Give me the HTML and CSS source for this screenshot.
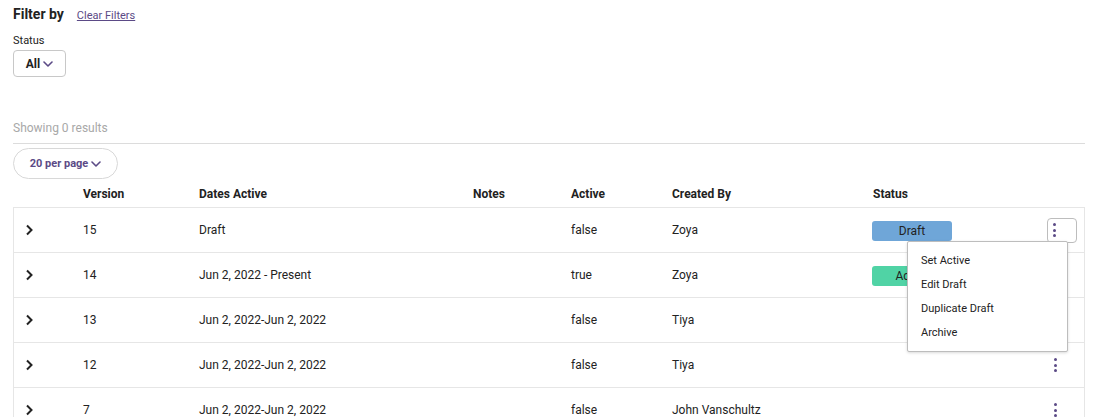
FILE: index.html
```html
<!DOCTYPE html>
<html>
<head>
<meta charset="utf-8">
<link rel="stylesheet" href="styles.css">
</head>
<body>
<div class="page">
  <div class="filter-head">
    <span class="filter-title">Filter by</span>
    <a class="clear-link" href="#">Clear Filters</a>
  </div>
  <div class="field-label">Status</div>
  <button class="select-btn"><span>All</span><svg class="chev-down" viewBox="0 0 10 6" width="10" height="6"><path d="M1 1l4 4 4-4" fill="none" stroke="#5b4a86" stroke-width="1.6" stroke-linecap="round" stroke-linejoin="round"/></svg></button>

  <div class="results">Showing 0 results</div>
  <div class="divider"></div>
  <button class="pill-btn"><span>20 per page</span><svg class="chev-down" viewBox="0 0 10 6" width="10" height="6"><path d="M1 1l4 4 4-4" fill="none" stroke="#5b4a86" stroke-width="1.6" stroke-linecap="round" stroke-linejoin="round"/></svg></button>

  <div class="table">
    <div class="row head">
      <div></div>
      <div>Version</div>
      <div>Dates Active</div>
      <div>Notes</div>
      <div>Active</div>
      <div>Created By</div>
      <div>Status</div>
      <div></div>
    </div>
    <div class="body">
      <div class="row">
        <div class="exp"><svg viewBox="0 0 8 12" width="8" height="12"><path d="M2 1.5l4.5 4.5-4.5 4.5" fill="none" stroke="#222" stroke-width="2"/></svg></div>
        <div>15</div>
        <div>Draft</div>
        <div></div>
        <div>false</div>
        <div>Zoya</div>
        <div class="status"><span class="badge draft">Draft</span></div>
        <div class="act">
          <button class="kebab open"><i></i><i></i><i></i></button>
          <div class="menu">
            <div class="menu-item">Set Active</div>
            <div class="menu-item">Edit Draft</div>
            <div class="menu-item">Duplicate Draft</div>
            <div class="menu-item">Archive</div>
          </div>
        </div>
      </div>
      <div class="row">
        <div class="exp"><svg viewBox="0 0 8 12" width="8" height="12"><path d="M2 1.5l4.5 4.5-4.5 4.5" fill="none" stroke="#222" stroke-width="2"/></svg></div>
        <div>14</div>
        <div>Jun 2, 2022 - Present</div>
        <div></div>
        <div>true</div>
        <div>Zoya</div>
        <div class="status"><span class="badge active">Active</span></div>
        <div class="act"><button class="kebab"><i></i><i></i><i></i></button></div>
      </div>
      <div class="row">
        <div class="exp"><svg viewBox="0 0 8 12" width="8" height="12"><path d="M2 1.5l4.5 4.5-4.5 4.5" fill="none" stroke="#222" stroke-width="2"/></svg></div>
        <div>13</div>
        <div>Jun 2, 2022-Jun 2, 2022</div>
        <div></div>
        <div>false</div>
        <div>Tiya</div>
        <div></div>
        <div class="act"><button class="kebab"><i></i><i></i><i></i></button></div>
      </div>
      <div class="row">
        <div class="exp"><svg viewBox="0 0 8 12" width="8" height="12"><path d="M2 1.5l4.5 4.5-4.5 4.5" fill="none" stroke="#222" stroke-width="2"/></svg></div>
        <div>12</div>
        <div>Jun 2, 2022-Jun 2, 2022</div>
        <div></div>
        <div>false</div>
        <div>Tiya</div>
        <div></div>
        <div class="act"><button class="kebab"><i></i><i></i><i></i></button></div>
      </div>
      <div class="row">
        <div class="exp"><svg viewBox="0 0 8 12" width="8" height="12"><path d="M2 1.5l4.5 4.5-4.5 4.5" fill="none" stroke="#222" stroke-width="2"/></svg></div>
        <div>7</div>
        <div>Jun 2, 2022-Jun 2, 2022</div>
        <div></div>
        <div>false</div>
        <div>John Vanschultz</div>
        <div></div>
        <div class="act"><button class="kebab"><i></i><i></i><i></i></button></div>
      </div>
    </div>
  </div>
</div>
</body>
</html>
```
FILE: styles.css
```css
* { box-sizing: border-box; }
html, body { margin: 0; padding: 0; background: #fff; }
body {
  font-family: Roboto, "Liberation Sans", Arial, sans-serif;
  color: #222;
  font-size: 12px;
  overflow: hidden;
}
.page {
  padding: 6px 25px 0 13px;
  display: flex;
  flex-direction: column;
  align-items: flex-start;
}
.filter-head {
  display: flex;
  align-items: baseline;
  gap: 13px;
  height: 20px;
}
.filter-title {
  font-size: 14px;
  font-weight: 700;
  color: #222;
}
.clear-link {
  font-size: 11px;
  color: #5b4a86;
  text-decoration: underline;
}
.field-label {
  margin-top: 8px;
  font-size: 11px;
  line-height: 14px;
  color: #222;
}
.select-btn {
  margin-top: 2px;
  width: 53px;
  height: 27px;
  border: 1px solid #c8c8c8;
  border-radius: 4px;
  background: #fff;
  display: flex;
  align-items: center;
  justify-content: center;
  gap: 3px;
  font-family: inherit;
  font-size: 12px;
  font-weight: 700;
  color: #222;
  padding: 0;
}
.chev-down { display: block; margin-top: 1px; }
.results {
  margin-top: 44px;
  font-size: 12px;
  color: #a8a8a8;
  line-height: 14px;
}
.divider {
  align-self: stretch;
  margin-top: 8px;
  border-top: 1px solid #dcdcdc;
}
.pill-btn {
  margin-top: 4px;
  width: 105px;
  height: 31px;
  border: 1px solid #d8d8d8;
  border-radius: 16px;
  background: #fff;
  display: flex;
  align-items: center;
  justify-content: center;
  gap: 3px;
  font-family: inherit;
  font-size: 11px;
  font-weight: 700;
  color: #5b4a86;
  padding: 0;
}
.table {
  align-self: stretch;
  display: flex;
  flex-direction: column;
}
.row {
  display: grid;
  grid-template-columns: 70px 116px 274px 98px 101px 201px 167px 1fr;
  align-items: center;
  height: 45px;
  border-bottom: 1px solid #e6e6e6;
}
.row.head {
  height: 28px;
  padding-top: 2px;
  border-bottom: none;
  font-weight: 700;
}
.body {
  border: 1px solid #e6e6e6;
  border-bottom: none;
}
.body .row {
  margin-left: -1px;
}
.exp {
  padding-left: 12px;
  display: flex;
  align-items: center;
}
.exp svg { display: block; }
.status {
  display: flex;
  align-items: center;
  padding-top: 2px;
  margin-left: -1px;
}
.badge {
  display: inline-block;
  width: 80px;
  height: 20px;
  line-height: 20px;
  border-radius: 3px;
  text-align: center;
  font-size: 12px;
  color: #222;
}
.badge.draft { background: #6fa6d8; }
.badge.active { background: #50d3a5; }
.act {
  position: relative;
  display: flex;
  align-items: center;
  padding-left: 7px;
}
.kebab {
  width: 30px;
  height: 25px;
  border: 2px solid transparent;
  border-radius: 4px;
  background: transparent;
  padding: 0 0 0 5px;
  display: flex;
  flex-direction: column;
  justify-content: center;
  align-items: flex-start;
  gap: 2.5px;
}
.kebab i {
  display: block;
  width: 3px;
  height: 3px;
  border-radius: 50%;
  background: #5b4a86;
}
.kebab.open {
  border-color: #bdbdbd;
  border-width: 1.5px;
}
.menu {
  position: absolute;
  top: 23px;
  right: 16px;
  width: 161px;
  height: 111px;
  background: #fff;
  border: 1px solid #bdbdbd;
  border-radius: 2px;
  box-shadow: 0 1px 3px rgba(0,0,0,0.15);
  padding: 7px 0 0 13px;
  z-index: 5;
}
.menu-item {
  height: 24px;
  line-height: 24px;
  font-size: 11px;
  color: #222;
}
```
